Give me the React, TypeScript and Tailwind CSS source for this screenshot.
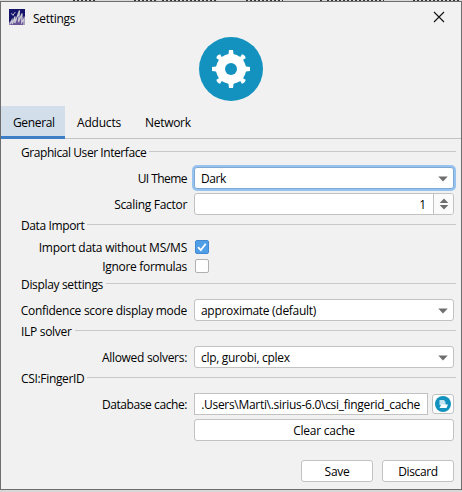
import React from "react";

type SectionProps = { title: string; tracking: string; children: React.ReactNode };

function Heading({ title, tracking }: { title: string; tracking: string }) {
  return (
    <div className="flex h-[18px] pl-5 pr-[5px] leading-[20px]">
      <span className={tracking}>{title}</span>
      <div className="ml-[3px] mt-2 h-px flex-1 bg-[#c8c8c8]" />
    </div>
  );
}

function Section({ title, tracking, children }: SectionProps) {
  return (
    <section>
      <Heading title={title} tracking={tracking} />
      {children}
    </section>
  );
}

function Row({ label, tracking, children }: { label: string; tracking: string; children: React.ReactNode }) {
  return (
    <div className="flex h-[22px]">
      <div className="flex w-[186px] justify-end leading-[24px]">
        <span className={tracking}>{label}</span>
      </div>
      <div className="ml-[7px] flex w-[260px]">{children}</div>
    </div>
  );
}

function Down() {
  return (
    <svg className="shrink-0" width="10" height="6" viewBox="0 0 10 6">
      <path d="M.3.5h9.4L5 5.5z" fill="#6e6e6e" />
    </svg>
  );
}

function Combo({ value, tracking, focused }: { value: string; tracking: string; focused?: boolean }) {
  return (
    <div
      className={
        "flex h-[22px] flex-1 justify-between rounded-[3px] border bg-white pl-[6px] pr-[5px] leading-[22px] " +
        (focused ? "border-[#7fa9d3] ring-2 ring-[#97c3f0]" : "border-[#c2c2c2]")
      }
    >
      <span className={tracking}>{value}</span>
      <div className="flex h-5 items-center pt-px">
        <Down />
      </div>
    </div>
  );
}

function Check({ label, tracking, checked }: { label: string; tracking: string; checked?: boolean }) {
  return (
    <div className="flex h-5 items-center">
      <div className="flex h-5 w-[186px] justify-end leading-[22px]">
        <span className={tracking}>{label}</span>
      </div>
      <div
        className={
          "ml-2 flex size-[14px] items-center justify-center rounded-[2px] border " +
          (checked ? "border-[#4488d0] bg-[#4f9ee8]" : "border-[#b0b0b0] bg-white")
        }
      >
        {checked && (
          <svg width="12" height="12" viewBox="0 0 12 12" fill="none" stroke="white" strokeWidth="1.8">
            <path d="M2 6.2 4.8 9.2 9.7 2.7" />
          </svg>
        )}
      </div>
    </div>
  );
}

const button = "flex h-[22px] justify-center rounded-[3px] border border-[#c2c2c2] bg-white leading-[22px]";

export default function App() {
  return (
    <div className="h-[492px] w-[462px] overflow-hidden bg-[#d8d8d8] font-['Open_Sans','Noto_Sans',sans-serif] text-[12px] whitespace-nowrap text-black">
      <svg className="block" width="462" height="1" viewBox="0 0 462 1" stroke="#333" strokeWidth="1">
        <path d="M73 .5h24M134 .5h22M162 .5h55M246 .5h37M320 .5h2M327 .5h57M413 .5h48" strokeDasharray="2 2" />
      </svg>
      <main className="flex h-[489px] flex-col border border-[#6e6e6e] bg-[#f1f1f1]">
        <header className="flex h-[35px] items-start pl-2 pt-[7px]">
          <svg width="16" height="16" viewBox="0 0 16 16">
            <path d="M0 0h16v16H0z" fill="#14146a" />
            <path d="M0 13 16 7v9H0z" fill="#6a5496" />
            <path d="M.7 15.5 3 11l.3 4L6 7.5 5.8 14 10.5 1.5 9.5 13 13 4.5l-.3 9L15 10v6" fill="none" stroke="#c9c9d4" strokeWidth="1.3" />
            <path d="m2 4.5 3 1.7M6.3 3 3.8 6.5" stroke="#c5c5d2" strokeWidth=".9" />
          </svg>
          <span className="ml-2 leading-[20px] tracking-[-0.3px]">Settings</span>
          <svg className="ml-auto mr-4 mt-[2px]" width="12" height="12" viewBox="0 0 12 12" stroke="#111" strokeWidth="1.1">
            <path d="m1 1 10 10M11 1 1 11" />
          </svg>
        </header>
        <div className="flex h-[69px] justify-center">
          <svg width="64" height="64" viewBox="0 0 64 64">
            <circle cx="32" cy="32" r="32" fill="#1492bf" />
            <g fill="white">
              <circle cx="32" cy="32" r="15" />
              {[0, 90, 180, 270].map((a) => (
                <path key={a} d="M27.5 19 29.5 17 30 13h4l.5 4 2 2z" transform={`rotate(${a} 32 32)`} />
              ))}
              {[45, 135, 225, 315].map((a) => (
                <path key={a} d="M28 19 30 16.5 29.3 14q2.7-2 5.4 0l-.7 2.500 2 2.500z" transform={`rotate(${a} 32 32)`} />
              ))}
            </g>
            <circle cx="32" cy="32" r="6" fill="#1492bf" />
          </svg>
        </div>
        <nav className="flex h-[33px] border-b border-[#c2c2c2] leading-[34px]">
          <div className="h-[33px] w-16 border-b-3 border-[#3d7fc7] bg-[#d2dfea] pl-3">
            <span className="tracking-[-0.35px]">General</span>
          </div>
          <span className="ml-3 w-[68px] tracking-[-0.2px]">Adducts</span>
          <span className="tracking-[-0.3px]">Network</span>
        </nav>
        <div className="flex flex-col pt-1">
          <Section title="Graphical User Interface" tracking="tracking-[-0.43px]">
            <div className="mt-[6px] mb-px flex flex-col gap-1">
              <Row label="UI Theme" tracking="tracking-[-0.55px]">
                <Combo value="Dark" tracking="tracking-[-0.4px]" focused />
              </Row>
              <Row label="Scaling Factor" tracking="tracking-[-0.3px]">
                <div className="flex h-[22px] flex-1 overflow-hidden rounded-[3px] border border-[#c2c2c2] bg-white leading-[22px]">
                  <span className="flex-1 pr-[7px] text-right">1</span>
                  <div className="flex w-5 items-center justify-center border-l border-[#c2c2c2] bg-[#fafafa]">
                    <svg width="10" height="12" viewBox="0 0 10 12" fill="#6e6e6e">
                      <path d="M.7 5h8.6L5 .5zM.7 7h8.6L5 11.500z" />
                    </svg>
                  </div>
                </div>
              </Row>
            </div>
          </Section>
          <Section title="Data Import" tracking="tracking-[-0.38px]">
            <div className="mt-[3px] h-[38px]">
              <Check label="Import data without MS/MS" tracking="tracking-[-0.25px]" checked />
              <div className="-mt-px">
                <Check label="Ignore formulas" tracking="tracking-[-0.3px]" />
              </div>
            </div>
          </Section>
          <Section title="Display settings" tracking="tracking-[-0.33px]">
            <div className="mt-[6px] mb-px">
              <Row label="Confidence score display mode" tracking="tracking-[-0.28px]">
                <Combo value="approximate (default)" tracking="tracking-[-0.3px]" />
              </Row>
            </div>
          </Section>
          <Section title="ILP solver" tracking="tracking-[-0.3px]">
            <div className="mt-[6px] mb-px">
              <Row label="Allowed solvers:" tracking="tracking-[-0.3px]">
                <Combo value="clp, gurobi, cplex" tracking="tracking-[-0.3px]" />
              </Row>
            </div>
          </Section>
          <Section title="CSI:FingerID" tracking="tracking-[-0.33px]">
            <div className="mt-[6px] flex flex-col gap-1">
              <Row label="Database cache:" tracking="tracking-[-0.42px]">
                <div className="flex h-[22px] w-[234px] justify-end overflow-hidden border border-[#c2c2c2] bg-white pr-[7px] leading-[22px]">
                  <span className="tracking-[-0.3px]">.Users\Marti\.sirius-6.0\csi_fingerid_cache</span>
                </div>
                <div className="ml-1 mt-px flex h-5 w-[22px] items-center justify-center rounded-[3px] border border-[#c2c2c2] bg-white">
                  <svg width="16" height="16" viewBox="0 0 16 16">
                    <circle cx="8" cy="8" r="8" fill="#1492bf" />
                    <path d="M4.500 4h4.500l1.500 2v3h-6z" fill="#c4e4f0" />
                    <path d="M3.700 5v7h.8L6.200 8.500H13L11.500 12H3.700z" fill="white" />
                  </svg>
                </div>
              </Row>
              <div className={button + " ml-[193px] w-[260px]"}>
                <span className="tracking-[-0.25px]">Clear cache</span>
              </div>
            </div>
          </Section>
        </div>
        <footer className="mt-[19px] flex justify-end gap-[9px] pr-[7px]">
          <div className={button + " w-[72px]"}><span className="tracking-[-0.3px]">Save</span></div>
          <div className={button + " w-[72px]"}><span className="tracking-[-0.38px]">Discard</span></div>
        </footer>
      </main>
    </div>
  );
}
